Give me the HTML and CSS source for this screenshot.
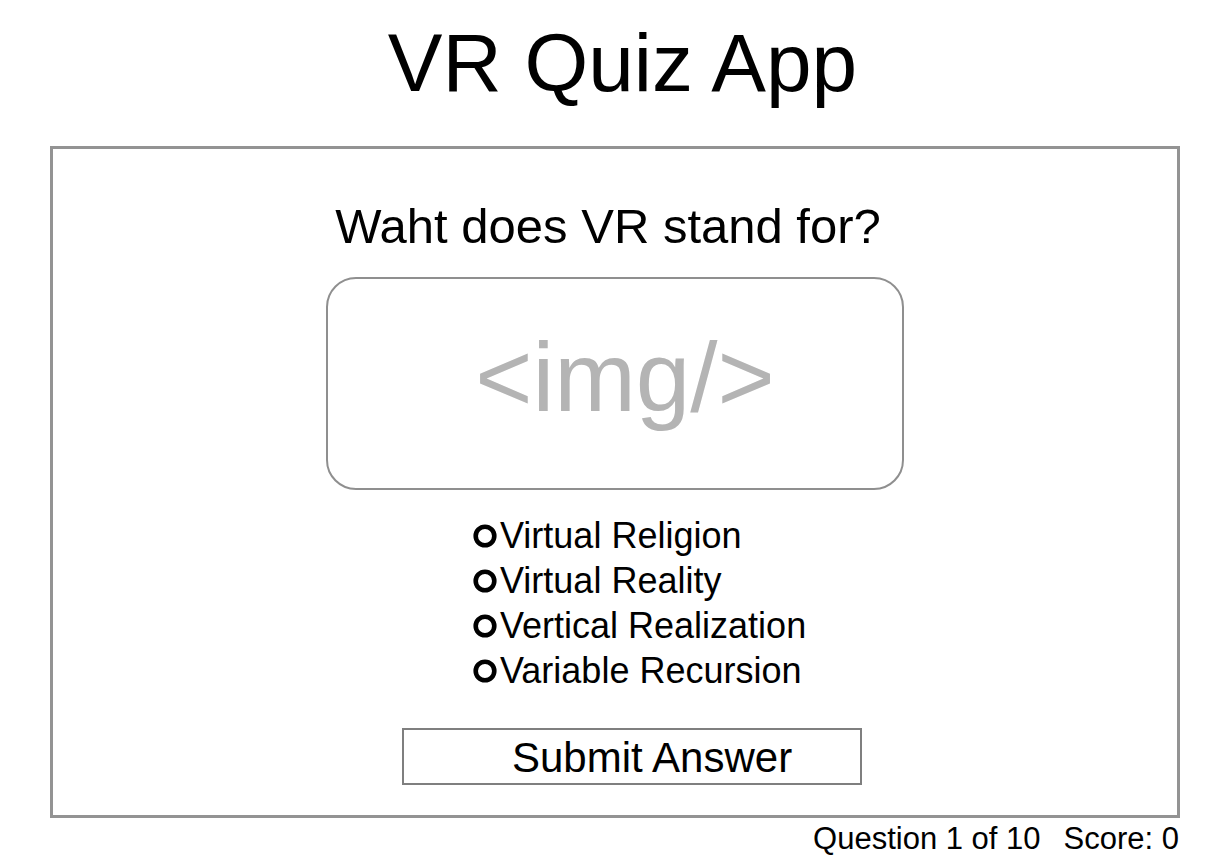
FILE: index.html
```html
<!DOCTYPE html>
<html lang="en">
<head>
<meta charset="utf-8">
<title>VR Quiz App</title>
<link rel="stylesheet" href="styles.css">
</head>
<body>
<h1 class="title">VR Quiz App</h1>
<main class="card">
  <h2 class="question">Waht does VR stand for?</h2>
  <div class="image-box"><span class="image-label">&lt;img/&gt;</span></div>
  <ul class="options">
    <li class="option"><svg class="radio" viewBox="0 0 24 24" width="24" height="24"><circle cx="12" cy="12" r="9.3" fill="none" stroke="#000" stroke-width="4.6"/></svg><span>Virtual Religion</span></li>
    <li class="option"><svg class="radio" viewBox="0 0 24 24" width="24" height="24"><circle cx="12" cy="12" r="9.3" fill="none" stroke="#000" stroke-width="4.6"/></svg><span>Virtual Reality</span></li>
    <li class="option"><svg class="radio" viewBox="0 0 24 24" width="24" height="24"><circle cx="12" cy="12" r="9.3" fill="none" stroke="#000" stroke-width="4.6"/></svg><span>Vertical Realization</span></li>
    <li class="option"><svg class="radio" viewBox="0 0 24 24" width="24" height="24"><circle cx="12" cy="12" r="9.3" fill="none" stroke="#000" stroke-width="4.6"/></svg><span>Variable Recursion</span></li>
  </ul>
  <button class="submit" type="button">Submit Answer</button>
</main>
<footer class="status"><span>Question 1 of 10</span><span class="score">Score: 0</span></footer>
</body>
</html>
```
FILE: styles.css
```css
html, body {
  margin: 0;
  padding: 0;
  background: #fff;
}
body {
  font-family: "Liberation Sans", Arial, sans-serif;
  color: #000;
  padding-top: 17px;
}
.title {
  margin: 0 0 37px 0;
  font-size: 82px;
  line-height: 92px;
  font-weight: normal;
  text-align: center;
  padding-left: 24px;
}
.card {
  box-sizing: border-box;
  margin-left: 50px;
  width: 1130px;
  height: 672px;
  border: 3px solid #939393;
  display: flex;
  flex-direction: column;
  padding-top: 49px;
}
.question {
  margin: 0;
  font-size: 49px;
  line-height: 56px;
  font-weight: normal;
  text-align: center;
  padding-right: 14px;
}
.image-box {
  box-sizing: border-box;
  align-self: center;
  margin-top: 23px;
  width: 578px;
  height: 213px;
  border: 2px solid #8f8f8f;
  border-radius: 30px;
  text-align: center;
  padding-top: 50px;
  padding-left: 20px;
}
.image-label {
  display: block;
  font-size: 98px;
  line-height: 96px;
  color: #b4b4b4;
}
.options {
  list-style: none;
  margin: 23px 0 0 420px;
  padding: 0;
}
.option {
  display: flex;
  align-items: center;
  gap: 3px;
  font-size: 36px;
  line-height: 45px;
  height: 45px;
}
.radio {
  display: block;
  flex: none;
  width: 24px;
  height: 24px;
}
.submit {
  box-sizing: border-box;
  margin: 35px 0 0 349px;
  width: 460px;
  height: 57px;
  border: 2px solid #7f7f7f;
  background: #fff;
  color: #000;
  font-family: "Liberation Sans", Arial, sans-serif;
  font-size: 42px;
  line-height: 55px;
  padding: 0 0 0 108px;
  text-align: left;
}
.status {
  text-align: right;
  padding-right: 42px;
  padding-top: 4px;
  font-size: 31px;
  line-height: 34px;
}
.score {
  margin-left: 23px;
}
```
